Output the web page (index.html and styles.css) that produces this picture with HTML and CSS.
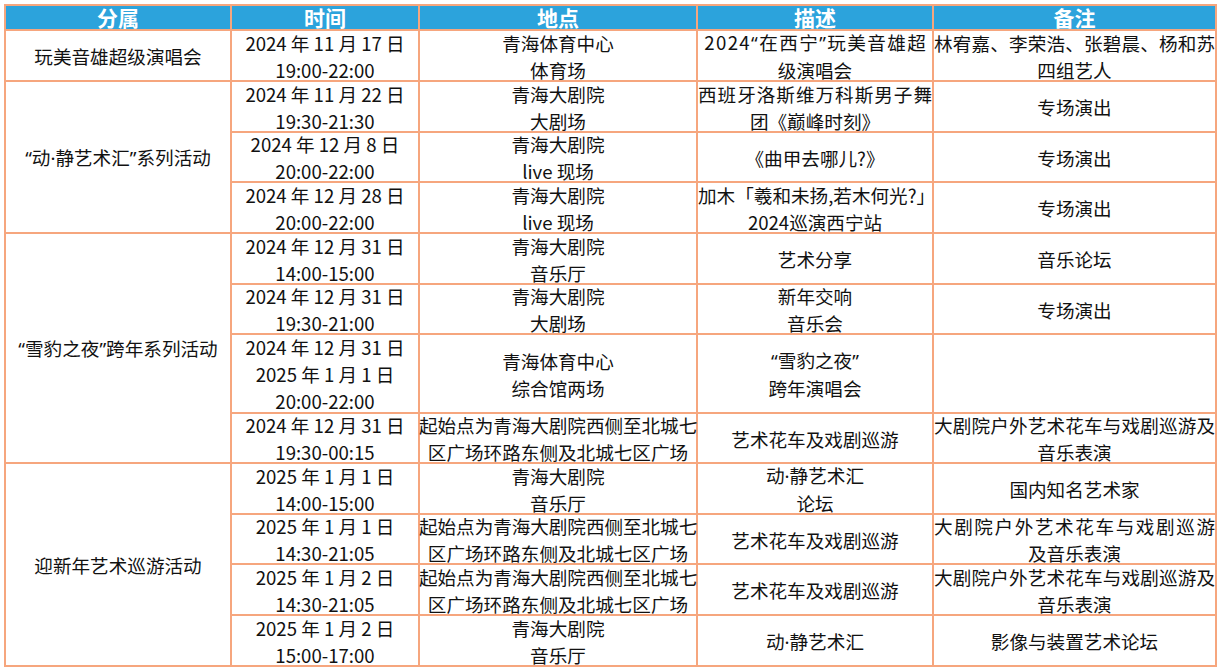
FILE: index.html
```html
<!DOCTYPE html>
<html lang="zh-CN">
<head>
<meta charset="utf-8">
<title>活动安排</title>
<link rel="stylesheet" href="styles.css">
</head>
<body>
<div class="sheet">
  <div class="hd">分属</div>
  <div class="hd">时间</div>
  <div class="hd">地点</div>
  <div class="hd">描述</div>
  <div class="hd">备注</div>

  <!-- row 1 -->
  <div class="c g1"><div class="t">玩美音雄超级演唱会</div></div>
  <div class="c"><div class="t">2024 年 11 月 17 日<br>19:00-22:00</div></div>
  <div class="c"><div class="t">青海体育中心<br>体育场</div></div>
  <div class="c"><div class="t"><span class="wide">2024<span class="lt">“</span>在西宁<span class="lt">”</span>玩美音雄超</span><br>级演唱会</div></div>
  <div class="c"><div class="t"><span class="j">林宥嘉、李荣浩、张碧晨、杨和苏</span>四组艺人</div></div>

  <!-- row 2 -->
  <div class="c g2"><div class="t"><span class="lt">“</span>动<span class="lt">·</span>静艺术汇<span class="lt">”</span>系列活动</div></div>
  <div class="c"><div class="t">2024 年 11 月 22 日<br>19:30-21:30</div></div>
  <div class="c"><div class="t">青海大剧院<br>大剧场</div></div>
  <div class="c"><div class="t"><span class="j">西班牙洛斯维万科斯男子舞</span>团《巅峰时刻》</div></div>
  <div class="c"><div class="t">专场演出</div></div>

  <!-- row 3 -->
  <div class="c"><div class="t">2024 年 12 月 8 日<br>20:00-22:00</div></div>
  <div class="c"><div class="t">青海大剧院<br>live 现场</div></div>
  <div class="c"><div class="t">《曲甲去哪儿?》</div></div>
  <div class="c"><div class="t">专场演出</div></div>

  <!-- row 4 -->
  <div class="c"><div class="t">2024 年 12 月 28 日<br>20:00-22:00</div></div>
  <div class="c"><div class="t">青海大剧院<br>live 现场</div></div>
  <div class="c"><div class="t"><span class="j">加木「羲和未扬,若木何光?」</span>2024巡演西宁站</div></div>
  <div class="c"><div class="t">专场演出</div></div>

  <!-- row 5 -->
  <div class="c g3"><div class="t"><span class="lt">“</span>雪豹之夜<span class="lt">”</span>跨年系列活动</div></div>
  <div class="c"><div class="t">2024 年 12 月 31 日<br>14:00-15:00</div></div>
  <div class="c"><div class="t">青海大剧院<br>音乐厅</div></div>
  <div class="c"><div class="t">艺术分享</div></div>
  <div class="c"><div class="t">音乐论坛</div></div>

  <!-- row 6 -->
  <div class="c"><div class="t">2024 年 12 月 31 日<br>19:30-21:00</div></div>
  <div class="c"><div class="t">青海大剧院<br>大剧场</div></div>
  <div class="c"><div class="t">新年交响<br>音乐会</div></div>
  <div class="c"><div class="t">专场演出</div></div>

  <!-- row 7 -->
  <div class="c"><div class="t">2024 年 12 月 31 日<br>2025 年 1 月 1 日<br>20:00-22:00</div></div>
  <div class="c"><div class="t">青海体育中心<br>综合馆两场</div></div>
  <div class="c"><div class="t"><span class="lt">“</span>雪豹之夜<span class="lt">”</span><br>跨年演唱会</div></div>
  <div class="c"></div>

  <!-- row 8 -->
  <div class="c"><div class="t">2024 年 12 月 31 日<br>19:30-00:15</div></div>
  <div class="c"><div class="t"><span class="j tight">起始点为青海大剧院西侧至北城七</span>区广场环路东侧及北城七区广场</div></div>
  <div class="c"><div class="t">艺术花车及戏剧巡游</div></div>
  <div class="c"><div class="t"><span class="j">大剧院户外艺术花车与戏剧巡游及</span>音乐表演</div></div>

  <!-- row 9 -->
  <div class="c g4"><div class="t">迎新年艺术巡游活动</div></div>
  <div class="c"><div class="t">2025 年 1 月 1 日<br>14:00-15:00</div></div>
  <div class="c"><div class="t">青海大剧院<br>音乐厅</div></div>
  <div class="c"><div class="t">动<span class="lt">·</span>静艺术汇<br>论坛</div></div>
  <div class="c"><div class="t">国内知名艺术家</div></div>

  <!-- row 10 -->
  <div class="c"><div class="t">2025 年 1 月 1 日<br>14:30-21:05</div></div>
  <div class="c"><div class="t"><span class="j tight">起始点为青海大剧院西侧至北城七</span>区广场环路东侧及北城七区广场</div></div>
  <div class="c"><div class="t">艺术花车及戏剧巡游</div></div>
  <div class="c"><div class="t"><span class="j">大剧院户外艺术花车与戏剧巡游</span>及音乐表演</div></div>

  <!-- row 11 -->
  <div class="c"><div class="t">2025 年 1 月 2 日<br>14:30-21:05</div></div>
  <div class="c"><div class="t"><span class="j tight">起始点为青海大剧院西侧至北城七</span>区广场环路东侧及北城七区广场</div></div>
  <div class="c"><div class="t">艺术花车及戏剧巡游</div></div>
  <div class="c"><div class="t"><span class="j">大剧院户外艺术花车与戏剧巡游及</span>音乐表演</div></div>

  <!-- row 12 -->
  <div class="c"><div class="t">2025 年 1 月 2 日<br>15:00-17:00</div></div>
  <div class="c"><div class="t">青海大剧院<br>音乐厅</div></div>
  <div class="c"><div class="t">动<span class="lt">·</span>静艺术汇</div></div>
  <div class="c"><div class="t">影像与装置艺术论坛</div></div>
</div>
</body>
</html>
```

FILE: styles.css
```css
html, body {
  margin: 0;
  padding: 0;
  background: #ffffff;
}

body {
  font-family: "Noto Sans CJK SC", "Noto Sans", sans-serif;
  color: #111111;
}

.sheet {
  display: grid;
  grid-template-columns: 224px 186px 276px 234px 281px;
  grid-template-rows: 23px 49px 49px 48px 49px 49px 48px 77px 48px 49px 48px 49px 49px;
  gap: 2px;
  padding: 2px;
  margin: 4px 0 0 4px;
  width: max-content;
  background: #f6a67e;
}

.hd {
  background: #2ca3dc;
  color: #ffffff;
  font-weight: 700;
  font-size: 21px;
  line-height: 23px;
  display: flex;
  align-items: center;
  justify-content: center;
}

.c {
  background: #ffffff;
  font-size: 18.6px;
  line-height: 27px;
  display: flex;
  flex-direction: column;
  justify-content: center;
  overflow: visible;
}

.t {
  text-align: center;
  white-space: nowrap;
}

.j {
  display: block;
  white-space: normal;
  text-align: justify;
  text-align-last: justify;
  text-justify: inter-character;
}

.wide {
  letter-spacing: 1.4px;
  margin-right: -1.4px;
}

.tight {
  letter-spacing: -0.25px;
  margin: 0 -1px;
}

.lt {
  font-family: "Noto Sans", sans-serif;
}

.g1 { grid-row: span 1; }
.g2 { grid-row: span 3; }
.g3 { grid-row: span 4; }
.g4 { grid-row: span 4; }
```
